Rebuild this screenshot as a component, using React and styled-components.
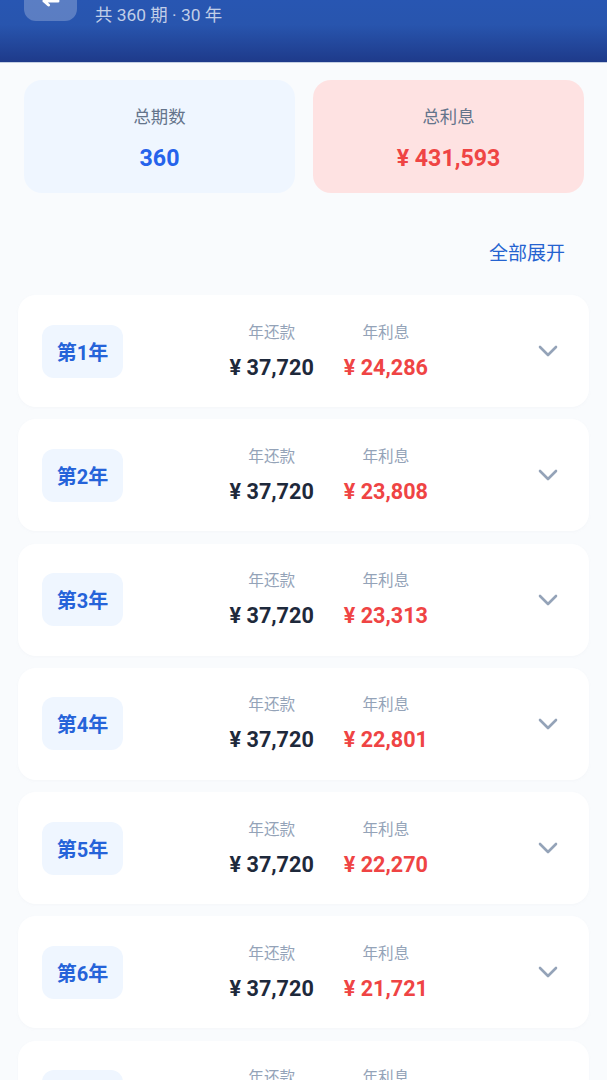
import React from "react";
import styled, { createGlobalStyle } from "styled-components";

const Global = createGlobalStyle`
  html, body { margin: 0; padding: 0; background: #f8fafc; }
  body { font-family: Roboto, "Noto Sans CJK SC", sans-serif; overflow: hidden; }
`;

const Page = styled.div`
  width: 607px;
  height: 1080px;
  overflow: hidden;
  background: #f9fbfd;
  display: flex;
  flex-direction: column;
`;

const Header = styled.header`
  height: 63px;
  flex: none;
  overflow: hidden;
  display: flex;
  align-items: flex-end;
  gap: 18px;
  padding: 0 24px 41px;
  box-sizing: border-box;
  background: linear-gradient(180deg, #2856b2 0%, #2855ae 40%, #1e3a8a 100%);
  border-bottom: 1px solid #c4cfe2;
`;

const BackButton = styled.button`
  width: 53px;
  height: 53px;
  flex: none;
  padding: 0 0 13px;
  border: none;
  border-radius: 12px;
  background: rgba(255, 255, 255, 0.24);
  color: #fff;
  display: flex;
  align-items: flex-end;
  justify-content: center;
  box-sizing: border-box;
`;

const Subtitle = styled.div`
  font-size: 17.4px;
  line-height: 20px;
  color: rgba(255, 255, 255, 0.72);
  margin-bottom: -4px;
  white-space: nowrap;
`;

const Summary = styled.section`
  display: grid;
  grid-template-columns: 271px 271px;
  gap: 18px;
  padding: 17px 24px 0;
`;

const SummaryCard = styled.div`
  height: 113px;
  border-radius: 18px;
  background: ${(p) => p.$bg};
  display: flex;
  flex-direction: column;
  align-items: center;
  padding-top: 26px;
  box-sizing: border-box;
`;

const SummaryLabel = styled.div`
  font-size: 17.4px;
  line-height: 22px;
  color: #64748b;
`;

const SummaryValue = styled.div`
  font-size: 23.2px;
  line-height: 28px;
  font-weight: 700;
  margin-top: 16px;
  color: ${(p) => p.$color};
`;

const Toolbar = styled.div`
  display: flex;
  justify-content: flex-end;
  padding: 48px 42px 0 0;
`;

const ExpandAll = styled.button`
  border: none;
  background: none;
  padding: 0;
  font: inherit;
  font-size: 19px;
  line-height: 26px;
  color: #2563d0;
`;

const List = styled.div`
  display: flex;
  flex-direction: column;
  gap: 12.3px;
  padding: 28px 18px 0;
`;

const YearRow = styled.article`
  height: 112px;
  flex: none;
  background: #fff;
  border-radius: 18px;
  display: flex;
  align-items: center;
  padding: 0 31px 0 24px;
  box-sizing: border-box;
  box-shadow: 0 1px 3px rgba(148, 163, 184, 0.05);
`;

const YearBadge = styled.div`
  width: 81px;
  height: 53px;
  flex: none;
  border-radius: 12px;
  background: #eff6ff;
  color: #2563d9;
  font-size: 20px;
  font-weight: 700;
  display: flex;
  align-items: center;
  justify-content: center;
`;

const Stats = styled.div`
  flex: 1;
  display: flex;
  justify-content: flex-end;
  gap: 30px;
  padding-right: 112px;
  margin-right: -1px;
`;

const Stat = styled.div`
  display: flex;
  flex-direction: column;
  align-items: center;
  gap: 12px;
`;

const StatLabel = styled.div`
  font-size: 15.6px;
  line-height: 20px;
  color: #94a3b8;
`;

const StatValue = styled.div`
  font-size: 21.6px;
  line-height: 25px;
  font-weight: 700;
  color: ${(p) => p.$color};
  white-space: nowrap;
`;

const ChevronIcon = styled.svg`
  flex: none;
  margin-left: -1px;
`;

const Chevron = () => (
  <ChevronIcon width="20" height="12" viewBox="0 0 20 12" fill="none">
    <path d="M2 2l8 8 8-8" stroke="#94a3b8" strokeWidth="2.6" strokeLinecap="round" strokeLinejoin="round" />
  </ChevronIcon>
);

const BackArrow = () => (
  <svg width="18" height="14" viewBox="0 0 18 14" fill="none">
    <path d="M16 7H2M6.5 3L2 7l4.5 4" stroke="#fff" strokeWidth="3" strokeLinecap="round" strokeLinejoin="round" />
  </svg>
);

const years = [
  ["第1年", "24,286"],
  ["第2年", "23,808"],
  ["第3年", "23,313"],
  ["第4年", "22,801"],
  ["第5年", "22,270"],
  ["第6年", "21,721"],
  ["第7年", "21,151"],
];

export default function App() {
  return (
    <Page>
      <Global />
      <Header>
        <BackButton aria-label="返回"><BackArrow /></BackButton>
        <Subtitle>共 360 期 · 30 年</Subtitle>
      </Header>
      <Summary>
        <SummaryCard $bg="#eff6ff">
          <SummaryLabel>总期数</SummaryLabel>
          <SummaryValue $color="#2563eb">360</SummaryValue>
        </SummaryCard>
        <SummaryCard $bg="#fee2e2">
          <SummaryLabel>总利息</SummaryLabel>
          <SummaryValue $color="#ef4444">¥ 431,593</SummaryValue>
        </SummaryCard>
      </Summary>
      <Toolbar>
        <ExpandAll>全部展开</ExpandAll>
      </Toolbar>
      <List>
        {years.map(([year, interest]) => (
          <YearRow key={year}>
            <YearBadge>{year}</YearBadge>
            <Stats>
              <Stat>
                <StatLabel>年还款</StatLabel>
                <StatValue $color="#1e293b">¥ 37,720</StatValue>
              </Stat>
              <Stat>
                <StatLabel>年利息</StatLabel>
                <StatValue $color="#ef4444">¥ {interest}</StatValue>
              </Stat>
            </Stats>
            <Chevron />
          </YearRow>
        ))}
      </List>
    </Page>
  );
}
